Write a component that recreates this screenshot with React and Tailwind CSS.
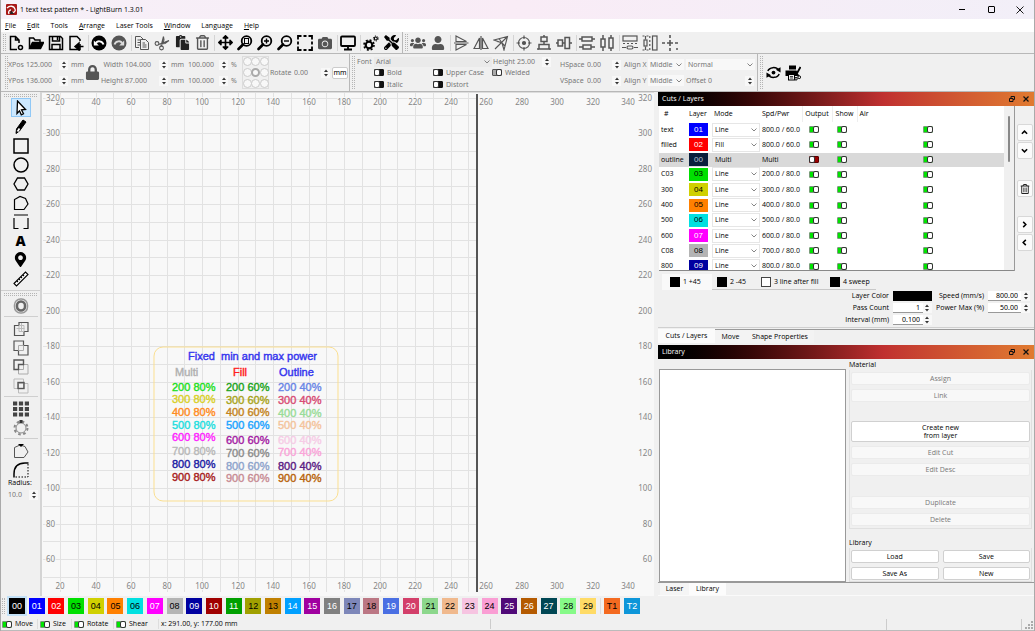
/**
 * App.jsx — Laser cutting editor window
 * Menu bar, tool bars, workspace with rulers, cut layers and material library.
 */
import {
  FaArrowsAlt, FaCamera, FaCut, FaLock, FaMapMarkerAlt,
  FaPaste, FaPrint, FaRegTrashAlt, FaTools, FaUser, FaUsers,
} from 'react-icons/fa'

const MENUS = ['File', 'Edit', 'Tools', 'Arrange', 'Laser Tools', 'Window', 'Language', 'Help']
const MENU_PLAIN = ['Tools', 'Laser Tools', 'Language']

const LAYERS = [
  { name: 'text',    no: '01', cls: 'bg-[#0000ff] text-white',     mode: 'Line', spd: '800.0 / 60.0' },
  { name: 'filled',  no: '02', cls: 'bg-[#ff0000] text-white',     mode: 'Fill', spd: '800.0 / 60.0' },
  { name: 'outline', no: '00', cls: 'bg-[#0a1f3c] text-[#b8c4d4]', mode: 'Multi', spd: 'Multi', selected: true },
  { name: 'C03',     no: '03', cls: 'bg-[#00e000] text-black',     mode: 'Line', spd: '200.0 / 80.0' },
  { name: '300',     no: '04', cls: 'bg-[#d0d000] text-black',     mode: 'Line', spd: '300.0 / 80.0' },
  { name: '400',     no: '05', cls: 'bg-[#ff8000] text-black',     mode: 'Line', spd: '400.0 / 80.0' },
  { name: '500',     no: '06', cls: 'bg-[#00e0e0] text-black',     mode: 'Line', spd: '500.0 / 80.0' },
  { name: '600',     no: '07', cls: 'bg-[#ff00ff] text-white',     mode: 'Line', spd: '600.0 / 80.0' },
  { name: 'C08',     no: '08', cls: 'bg-[#b4b4b4] text-black',     mode: 'Line', spd: '700.0 / 80.0' },
  { name: '800',     no: '09', cls: 'bg-[#0000a0] text-white',     mode: 'Line', spd: '800.0 / 80.0' },
]

const PALETTE = [
  ['00', 'bg-black text-white'], ['01', 'bg-[#0000ff] text-white'], ['02', 'bg-[#ff0000] text-white'],
  ['03', 'bg-[#00e000] text-black'], ['04', 'bg-[#d0d000] text-black'], ['05', 'bg-[#ff8000] text-black'],
  ['06', 'bg-[#00e0e0] text-black'], ['07', 'bg-[#ff00ff] text-white'], ['08', 'bg-[#b4b4b4] text-black'],
  ['09', 'bg-[#0000a0] text-white'], ['10', 'bg-[#a00000] text-white'], ['11', 'bg-[#00a000] text-white'],
  ['12', 'bg-[#a0a000] text-black'], ['13', 'bg-[#c08000] text-black'], ['14', 'bg-[#00a0ff] text-white'],
  ['15', 'bg-[#a000a0] text-white'], ['16', 'bg-[#808080] text-white'], ['17', 'bg-[#7d87b9] text-black'],
  ['18', 'bg-[#bb7784] text-black'], ['19', 'bg-[#4a6fe3] text-white'], ['20', 'bg-[#d33f6a] text-white'],
  ['21', 'bg-[#8cd78c] text-black'], ['22', 'bg-[#f0b98d] text-black'], ['23', 'bg-[#f6c4e1] text-black'],
  ['24', 'bg-[#fa9ed4] text-black'], ['25', 'bg-[#500a78] text-white'], ['26', 'bg-[#b45a00] text-white'],
  ['27', 'bg-[#004754] text-white'], ['28', 'bg-[#86fa88] text-black'], ['29', 'bg-[#ffdb66] text-black'],
]

// Test pattern on the canvas: baseline and colour of every line
const PATTERN = [
  { x: 130, rows: [[298, '200 80%', '#1fe01f'], [310, '300 80%', '#d8d028'], [323, '400 80%', '#ff8c1f'], [336, '500 80%', '#1fdede'], [348, '600 80%', '#ff1fff'], [362, '700 80%', '#b8b8b8'], [375, '800 80%', '#1c1ca4'], [388, '900 80%', '#a81c1c']] },
  { x: 184, rows: [[298, '200 60%', '#1ca41c'], [311, '300 60%', '#a8a420'], [323, '400 60%', '#c48420'], [336, '500 60%', '#20a4ff'], [351, '600 60%', '#a41ca4'], [364, '700 60%', '#8c8c8c'], [377, '800 60%', '#8ea4cc'], [389, '900 60%', '#c88c94']] },
  { x: 236, rows: [[298, '200 40%', '#6a86e6'], [311, '300 40%', '#d84c74'], [324, '400 40%', '#98dc98'], [336, '500 40%', '#f4c49c'], [351, '600 40%', '#f6cce6'], [363, '700 40%', '#faa4d8'], [377, '800 40%', '#5c1c84'], [389, '900 40%', '#b8640c']] },
]

/* ---------- small controls ---------- */

const TOGGLES = {
  on:    'bg-[#00e400] border-[#7a9a7a] after:right-[-1px]',
  off:   'bg-[#9a0000] border-[#5a0000] after:left-[-1px]',
  dark:  'bg-[#111] border-[#111] after:left-[-1px]',
  faded: 'bg-[#aaa] border-[#555] after:right-[-1px]',
}

function Toggle({ kind = 'on', id, label }) {
  return (
    <input
      type="checkbox"
      id={id}
      aria-label={label}
      defaultChecked={kind === 'on'}
      className={`relative block h-[7px] w-[10px] shrink-0 appearance-none rounded-[1px] border after:absolute after:top-[-1px] after:h-[7px] after:w-[6px] after:rounded-[2px] after:border after:border-[#333] after:bg-white ${TOGGLES[kind]}`}
    />
  )
}

function LabelledToggle({ id, kind, text }) {
  return (
    <div className="flex items-center gap-[3px]">
      <Toggle id={id} kind={kind} />
      <label htmlFor={id}>{text}</label>
    </div>
  )
}

function Spin() {
  return (
    <div className="flex h-[10px] w-[9px] shrink-0 flex-col bg-[#f8f8f8] text-[#333]">
      <button aria-label="Increase" className="flex flex-1 items-center justify-center">
        <svg width="4" height="3" viewBox="0 0 4 3"><path d="M0 3L2 .5l2 2.500z" fill="currentColor" /></svg>
      </button>
      <button aria-label="Decrease" className="flex flex-1 items-center justify-center">
        <svg width="4" height="3" viewBox="0 0 4 3"><path d="M0 0l2 2.500L4 0z" fill="currentColor" /></svg>
      </button>
    </div>
  )
}

function NumField({ id, label, value, labelCls = '', inputCls = '', unit }) {
  return (
    <div className="flex h-4 items-center">
      {label && <label htmlFor={id} className={`shrink-0 whitespace-nowrap ${labelCls}`}>{label}</label>}
      <input id={id} aria-label={label ? undefined : id} defaultValue={value} className={`min-w-0 shrink-0 bg-transparent ${inputCls}`} />
      <Spin />
      {unit && <span className="shrink-0 pl-[3px]">{unit}</span>}
    </div>
  )
}

function Combo({ id, value, cls = '', bg = 'bg-[#f8f8f8]' }) {
  return (
    <div className={`relative shrink-0 ${bg} ${cls}`}>
      <select id={id} aria-label={id} defaultValue={value} className="block h-full w-full appearance-none pl-[2px]">
        <option>{value}</option>
      </select>
      <svg width="6" height="4" viewBox="0 0 6 4" className="pointer-events-none absolute top-1/2 right-[2px] -translate-y-1/2">
        <path d="M.5.5L3 3 5.500.5" fill="none" stroke="#666" strokeWidth=".8" />
      </svg>
    </div>
  )
}

function Grip({ horizontal }) {
  return horizontal
    ? <div className="mx-[3px] h-[3px] border-y border-dotted border-[#b4b4b4]" />
    : <div className="my-[2px] w-[3px] shrink-0 self-stretch border-x border-dotted border-[#b4b4b4]" />
}

/* ---------- icons ---------- */

function Ico({ children, size = 16, color = '#000', sw = 1.5 }) {
  return (
    <svg width={size} height={size} viewBox="0 0 16 16" fill="none" stroke={color} strokeWidth={sw}>
      {children}
    </svg>
  )
}

const GREY = '#555'

const Lens = ({ children }) => (
  <Ico sw={1.8}>
    <circle cx="9.500" cy="6" r="4.800" />
    <path d="M6 9.500L1.500 14" strokeWidth="2.600" strokeLinecap="round" />
    {children}
  </Ico>
)

const MAIN_TOOLS = [
  ['New', <Ico><path d="M9 14.500H2.500v-13h5L11 5v3M7.500 1.500V5H11" /><circle cx="12.500" cy="12.500" r="2" /></Ico>],
  ['Open', <Ico><path d="M1.500 13V3h4l1.500 2h5v2.500" /><path d="M1.500 13.500L4.500 7.500h11L12.500 13.500z" fill="#000" /></Ico>],
  ['Save', <Ico><path d="M1.500 1.500h11l2 2v11h-13z" /><path d="M4.500 1.500V6h7V1.500M4 14.500V9.500h8v5" /><path d="M9.500 2v3" /></Ico>],
  ['Import', <Ico><path d="M12 9V14.500H2v-13h7L12 4.500V6" /><path d="M15.500 11.500H9M11 8l-4 3.500L11 15z" fill="#000" /></Ico>],
  null,
  ['Undo', <Ico><circle cx="8" cy="8" r="7.500" fill="#000" stroke="none" /><path d="M5 8.500C6 5.500 11 5.500 12.500 9.500" stroke="#fff" strokeWidth="2" /><path d="M2.800 5.500v5h5z" fill="#fff" stroke="none" /></Ico>],
  ['Redo', <Ico><circle cx="8" cy="8" r="7.500" fill={GREY} stroke="none" /><path d="M11 8.500C10 5.500 5 5.500 3.500 9.500" stroke="#ddd" strokeWidth="2" /><path d="M13.200 5.500v5h-5z" fill="#ddd" stroke="none" /></Ico>],
  null,
  ['Copy', <Ico color={GREY} sw={1}><path d="M5 12.500H1.500v-11h5L9 4M3.500 5H6M3.500 7.500H6M3.500 10H6" /><path d="M6.500 4.500h5L14.500 7.500v7h-8zM8.500 8H11M8.500 10h4M8.500 12h4" /></Ico>],
  ['Cut', <Ico color={GREY} sw={1.1}><circle cx="3" cy="8.500" r="1.900" /><circle cx="7.500" cy="13" r="1.900" /><path d="M4.500 9.500L15 5.500M7 11L9.500 1.500M9.500 1.500L10 5 7.500 11M15 5.500L11 8.500 4.800 9.200" /></Ico>],
  ['Paste', <FaPaste size={15} color="#222" />],
  ['Delete', <FaRegTrashAlt size={15} color={GREY} />],
  null,
  ['Pan', <FaArrowsAlt size={15} />],
  ['Zoom to page', <Lens><rect x="7.500" y="3.500" width="4" height="5" strokeWidth="1" /></Lens>],
  ['Zoom in', <Lens><path d="M9.500 3.500v5M7 6h5" strokeWidth="1.400" /></Lens>],
  ['Zoom out', <Lens><path d="M7 6h5" strokeWidth="1.400" /></Lens>],
  ['Frame selection', <Ico sw={1.8}><path d="M1 4.500V1h3.500M6.500 1h3M11.500 1H15v3.500M15 6.500v3M15 11.500V15h-3.500M9.500 15h-3M4.500 15H1v-3.500M1 9.500v-3" /></Ico>],
  ['Capture', <FaCamera size={14} color="#555" />],
  null,
  ['Preview', <Ico sw={1.8}><rect x="1" y="1.500" width="14" height="9.500" rx="1" /><path d="M8 11v3M4 14.500h8" /></Ico>],
  null,
  ['Settings', <Ico><circle cx="6" cy="10" r="3.300" strokeWidth="2.200" /><circle cx="6" cy="10" r="5" strokeWidth="1.600" strokeDasharray="2 1.930" /><circle cx="12.800" cy="3.500" r="1.500" strokeWidth="1.200" /><circle cx="12.800" cy="3.500" r="2.500" strokeWidth="1" strokeDasharray="1.200 1.420" /></Ico>],
  ['Device settings', <FaTools size={15} />],
]

const ARRANGE_TOOLS = [
  ['Group', <FaUsers size={16} color={GREY} />],
  ['Ungroup', <FaUser size={14} color={GREY} />],
  null,
  ['Flip vertical', <Ico color={GREY} sw={1.1}><path d="M3 1L13.500 6.500H3zM3 15L13.500 9.500H3zM1 8h14.500" /></Ico>],
  ['Flip horizontal', <Ico color={GREY} sw={1.2}><path d="M1 13.500L6.500 3v10.500zM15 13.500L9.500 3v10.500zM8 1v14" /></Ico>],
  ['Mirror', <Ico color={GREY} sw={1.1}><path d="M1 5L14.500 1.500 11 15 9 8zM14.500 1.500L2 14M4 6.500L9 7.500M6 3.500L9 8M9 8l3 3" /></Ico>],
  null,
  ['Align centers', <Ico color={GREY} sw={1.2}><circle cx="8" cy="8" r="5.500" /><circle cx="8" cy="8" r="1.500" fill={GREY} /><path d="M8 .5V4M8 12v3.500M.5 8H4M12 8h3.500" /></Ico>],
  ['Align vertical', <Ico color={GREY}><rect x="5" y="2" width="6" height="4.500" /><rect x="3" y="9.500" width="10" height="4.500" /><path d="M8 0v2M8 6.500v3M1 14h2M13 14h2" /></Ico>],
  ['Align horizontal', <Ico color={GREY}><rect x="2" y="5" width="4.500" height="6" /><rect x="9" y="2.500" width="4.500" height="11" /><path d="M0 8h2M6.500 8H9M13.500 8H16" /></Ico>],
  null,
  ['Distribute vertical', <Ico color={GREY}><rect x="3" y="2" width="10" height="4" /><rect x="4" y="10" width="8" height="4" /><path d="M0 4h3M13 4h3M0 12h4M12 12h4" /></Ico>],
  ['Distribute horizontal', <Ico color={GREY}><rect x="2" y="4" width="4" height="8" /><rect x="10" y="3" width="4" height="10" /><path d="M4 0v4M4 12v4M12 0v3M12 13v3" /></Ico>],
  null,
  ['Match width', <Ico color={GREY} sw={1.2}><rect x="1" y="1" width="14" height="5" /><path d="M1 8.500h2M5 8.500h2M9 8.500h2M13 8.500h2M0 12.500h4M12 12.500h4" /><rect x="5" y="11" width="6" height="3" rx="1.500" /></Ico>],
  ['Match height', <Ico color={GREY} sw={1.2}><rect x="10.500" y="1" width="4.500" height="14" /><path d="M.5 1h2M4.500 1h2M.5 15h2M4.500 15h2M3.500 1v3.500M3.500 11.500V15M7.800 1v2M7.800 5v2M7.800 9v2M7.800 13v2" /><rect x="2" y="5" width="3" height="6" /></Ico>],
  ['Move to center', <Ico color={GREY} sw={1.6}><path d="M8 0v3M8 5v6M8 13v3M0 8h3M5 8h6M13 8h3" /><path d="M14 14h2" /></Ico>],
]

const DRAW_TOOLS = [
  ['Select', <Ico sw={1.3}><path d="M4.500 1l8 8.500-4 .3 2 4-2.200 1-1.800-4L4 13.500z" fill="#fff" /></Ico>],
  ['Draw lines', <Ico><path d="M3 14.500l.5-4.500L10 1l3 2-6.500 9z" fill="#000" strokeWidth="1" /><path d="M4.500 12.500l2-3" stroke="#fff" strokeWidth="1.800" /></Ico>],
  ['Rectangle', <Ico><rect x="1" y="1" width="14" height="14" /></Ico>],
  ['Ellipse', <Ico><circle cx="8" cy="8" r="7" /></Ico>],
  ['Polygon', <Ico sw={1.3}><path d="M4.500 2h7L15 8l-3.500 6h-7L1 8z" /></Ico>],
  ['Edit nodes', <Ico sw={1.2}><path d="M1.500 14.500V4.500L7 1.500l5.500 2L15 9l-4 5.500z" /></Ico>],
  ['Edit tabs', <Ico sw={1.2}><path d="M1 1h14M1 4v10.500h4.500M10.500 14.500H15V4" /></Ico>],
  ['Text', <span className="font-['Noto_Sans',sans-serif] text-[14px] leading-none font-black">A</span>],
  ['Position laser', <FaMapMarkerAlt size={15} />],
  ['Measure', <Ico sw={1.1}><path d="M1 12.500L12.500 1l2.500 2.500L3.500 15z" fill="#fff" /><path d="M4 10l1 1M6 8l1 1M8 6l1 1M10 4l1 1" /></Ico>],
]

const EDIT_TOOLS = [
  ['Offset', <Ico><rect x="1.500" y="1" width="13" height="14" rx="6" stroke="#999" /><rect x="4" y="3.500" width="8" height="9" rx="4" stroke="#666" strokeWidth="2.500" /></Ico>],
  null,
  ['Weld', <Ico color={GREY} sw={1.2}><path d="M6 1.500h9v9h-4v4H1.500v-10H6z" /><path d="M6 4.500v6h5v-6zM3.500 7.500h8M8.500 2v9" stroke="#bbb" strokeWidth="1" /></Ico>],
  ['Boolean union', <Ico color={GREY} sw={1.2}><path d="M1 1h9.500v4.500H15V15H5.500v-4.500H1z" /><path d="M5.500 10.500v-5h5v5z" stroke="#aaa" strokeWidth="1" /></Ico>],
  ['Boolean subtract', <Ico color="#aaa" sw={1}><path d="M10.500 5.500H15V15H5.500v-4.500h5z" /><path d="M1 1h9.500v4.500h-5v5H1z" stroke={GREY} strokeWidth="1.400" /></Ico>],
  ['Boolean intersect', <Ico color="#bbb" sw={1}><path d="M1 1h9.500v9.500H1zM5.500 5.500H15V15H5.500z" /><rect x="5" y="4.500" width="6" height="6" stroke={GREY} strokeWidth="1.400" /></Ico>],
  null,
  ['Grid array', <Ico color="#444" sw={4}><path d="M0 2.500h16M0 8h16M0 13.500h16" strokeDasharray="4.200 1.700" /></Ico>],
  ['Circular array', <Ico color="#888" sw={1}><circle cx="8" cy="8" r="5" /><circle cx="8" cy="8" r="6.500" strokeWidth="2" strokeDasharray="2.600 2.500" /><path d="M6.500 1.500h3" stroke="#333" strokeWidth="3" /></Ico>],
  null,
  ['Start point', <Ico color={GREY} sw={1}><path d="M1.500 14.500V4.500L7 2l5 1.500L15 9l-4 5.500z" /><path d="M5 1h6L8 4z" fill="#000" stroke="none" /></Ico>],
  ['Fillet', <Ico><path d="M1 15.500V12C1 5 5 1 12 1h3.500" /><path d="M15 2v13H2" strokeWidth="1" strokeDasharray="1.500 1.500" /></Ico>],
]

function ToolRow({ tools }) {
  return tools.map((t, i) => t
    ? <button key={i} aria-label={t[0]} className="flex h-5 w-5 shrink-0 items-center justify-center">{t[1]}</button>
    : <div key={i} className="h-4 w-[3px] shrink-0 border-r border-[#d4d4d4]" />)
}

function ToolColumn({ tools, active }) {
  return tools.map((t, i) => t
    ? (
      <button
        key={i}
        aria-label={t[0]}
        className={`flex h-[19px] w-5 items-center justify-center ${t[0] === active ? 'border border-[#90c8f6] bg-[#cce8ff]' : ''}`}
      >
        {t[1]}
      </button>
    )
    : <div key={i} className="mt-px mb-[2px] h-px w-[34px] bg-[#cfcfcf]" />)
}

/* ---------- top area ---------- */

function TitleBar() {
  return (
    <header className="flex h-[19px] items-center bg-linear-to-r from-[#f6f0f8] via-[#f9ecf6] to-[#f2eff8] pl-[5px]">
      <svg width="11" height="11" viewBox="0 0 11 11">
        <rect width="11" height="11" rx="1" fill="#a81818" />
        <path d="M1 4c3-3 7-2 8 1 1 2-1 4-3 3M3 10c-1-2 0-4 2-4" fill="none" stroke="#fff" strokeWidth="1.300" />
        <path d="M5 6l3 4H4z" fill="#222" />
      </svg>
      <h1 className="pl-[3px]">1 text test pattern * - LightBurn 1.3.01</h1>
      <div className="ml-auto flex items-center gap-[7px] pr-[3px]">
        <button aria-label="Minimize" className="flex h-4 w-[22px] items-center justify-center"><span className="h-px w-[6px] bg-black" /></button>
        <button aria-label="Maximize" className="flex h-4 w-[22px] items-center justify-center"><span className="h-[7px] w-[7px] rounded-[1px] border border-black" /></button>
        <button aria-label="Close" className="flex h-4 w-[22px] items-center justify-center">
          <svg width="8" height="8" viewBox="0 0 8 8"><path d="M.5.5l7 7M7.500.5l-7 7" stroke="#000" strokeWidth=".9" /></svg>
        </button>
      </div>
    </header>
  )
}

function MenuBar() {
  return (
    <nav className="flex h-[13px] items-center gap-[11px] bg-white pl-1">
      {MENUS.map(m => (
        <button key={m} className="whitespace-nowrap">
          {MENU_PLAIN.includes(m) ? m : <><u>{m[0]}</u>{m.slice(1)}</>}
        </button>
      ))}
    </nav>
  )
}

function PropertyBar() {
  return (
    <div className="flex h-[38px] items-center border-b border-[#b8b8b8] pl-1 font-['Noto_Sans',sans-serif] text-[#777]">
      <Grip />
      <div className="w-[76px] shrink-0">
        <NumField id="xpos" label="XPos" value="125.000" labelCls="w-[18px]" inputCls="w-[33px]" unit="mm" />
        <NumField id="ypos" label="YPos" value="136.000" labelCls="w-[18px]" inputCls="w-[33px]" unit="mm" />
      </div>
      <button aria-label="Lock aspect ratio" className="flex w-4 shrink-0 justify-center text-[#555]"><FaLock size={15} /></button>
      <div className="w-[88px] shrink-0">
        <NumField id="width" label="Width" value="104.000" labelCls="w-[25px] pr-[2px] text-right" inputCls="w-[34px]" unit="mm" />
        <NumField id="height" label="Height" value="87.000" labelCls="w-[25px] pr-[2px] text-right" inputCls="w-[34px]" unit="mm" />
      </div>
      <div className="w-[54px] shrink-0">
        <NumField id="Width percent" value="100.000" inputCls="w-[31px]" unit="%" />
        <NumField id="Height percent" value="100.000" inputCls="w-[31px]" unit="%" />
      </div>
      <div className="grid w-[27px] shrink-0 grid-cols-3 gap-y-[2px] border border-[#ddd]">
        {Array.from({ length: 9 }, (_, i) => (
          <input
            key={i}
            type="radio"
            name="anchor"
            aria-label={`Anchor ${i + 1}`}
            defaultChecked={i === 4}
            className={`h-[9px] w-[9px] appearance-none rounded-full ${i === 4 ? 'border-2 border-[#aaa]' : 'border border-[#ccc]'} bg-[#f8f8f8]`}
          />
        ))}
      </div>
      <div className="w-[63px] shrink-0 pl-px">
        <NumField id="rotate" label="Rotate" value="0.00" labelCls="w-[24px]" inputCls="w-[27px]" />
      </div>
      <button className="h-3 w-4 shrink-0 rounded-[2px] border border-[#ccc] bg-white leading-none text-black">mm</button>
      <div className="mr-[2px] ml-[1px] w-px shrink-0 self-stretch bg-[#b8b8b8]" />
      <Grip />

      <div className="ml-[2px] flex w-[196px] shrink-0 flex-col">
        <div className="flex h-[12px] items-center">
          <label htmlFor="Font" className="w-[17px]">Font</label>
          <Combo id="Font" value="Arial" cls="h-[10px] w-[118px]" bg="bg-[#eaeaea]" />
          <NumField id="textheight" label="Height" value="25.00" labelCls="w-[24px] pl-[1px]" inputCls="w-[26px] pl-px" />
        </div>
        <div className="grid grid-cols-[59px_59px_auto] items-center gap-y-[2px] pl-[17px]">
          <LabelledToggle id="bold" kind="dark" text="Bold" />
          <LabelledToggle id="upper" kind="dark" text="Upper Case" />
          <LabelledToggle id="welded" kind="faded" text="Welded" />
          <LabelledToggle id="italic" kind="dark" text="Italic" />
          <LabelledToggle id="distort" kind="dark" text="Distort" />
        </div>
      </div>

      <div className="ml-[7px] w-[64px] shrink-0">
        <NumField id="hspace" label="HSpace" value="0.00" labelCls="w-[27px]" inputCls="w-[25px]" />
        <NumField id="vspace" label="VSpace" value="0.00" labelCls="w-[27px]" inputCls="w-[25px]" />
      </div>
      <div className="w-[62px] shrink-0">
        {['X', 'Y'].map(a => (
          <div key={a} className="flex h-4 items-center">
            <label htmlFor={`Align ${a}`} className="w-[24px] whitespace-nowrap">Align {a}</label>
            <Combo id={`Align ${a}`} value="Middle" cls="h-[11px] w-[36px]" />
          </div>
        ))}
      </div>
      <div className="w-[71px] shrink-0">
        <div className="flex h-4 items-center"><Combo id="Text mode" value="Normal" cls="h-[11px] w-[69px]" /></div>
        <NumField id="offset" label="Offset" value="0" labelCls="w-[22px]" inputCls="w-[37px]" />
      </div>
      <div className="mr-[2px] w-px shrink-0 self-stretch bg-[#b8b8b8]" />
      <Grip />
      <div className="flex text-black">
        <button aria-label="Rotary" className="flex h-5 w-5 items-center justify-center">
          <Ico size={15}><path d="M2 6.500C3.500 2 11 1.500 13.500 5.500M14 9.500C12.500 14 5 14.500 2.500 10.500" strokeWidth="1.600" /><path d="M.5 8v5.500L5.500 11zM15.500 8V2.500L10.500 5z" fill="#000" stroke="none" /><circle cx="8" cy="8" r="2" fill="#000" stroke="none" /></Ico>
        </button>
        <button aria-label="Print and cut" className="flex h-5 w-5 items-center justify-center">
          <Ico>
            <path d="M4 .5h7v4H4zM.5 5.500h11l1 2v3.500H.5z" fill="#000" stroke="none" />
            <rect x="3.500" y="9.500" width="6" height="5.500" fill="#eee" strokeWidth="1" />
            <path d="M5 11.500h3M5 13h3" strokeWidth=".7" />
            <path d="M15.500 2L11 10M10 8l4 3" strokeWidth="1.800" />
            <circle cx="14.200" cy="12.200" r="1.400" strokeWidth="1" fill="#eee" />
            <circle cx="11" cy="13.800" r="1.300" strokeWidth="1" fill="#eee" />
          </Ico>
        </button>
      </div>
    </div>
  )
}

/* ---------- workspace ---------- */

const toX = mm => Math.round(18 + (mm - 20) * 1.775)
const toY = mm => Math.round(40 + (300 - mm) * 1.775)
const steps = (from, to, by) => Array.from({ length: (to - from) / by + 1 }, (_, i) => from + i * by)

function Workspace() {
  return (
    <svg className="block h-full w-full bg-[#f8f8f8]" role="img" aria-label="Workspace">
      <g stroke="#e2e2e2" strokeWidth="1" shapeRendering="crispEdges">
        {steps(20, 250, 10).map(v => <line key={v} x1={toX(v)} x2={toX(v)} y1="0" y2="499" />)}
        {steps(50, 320, 10).map(v => <line key={v} x1="1" x2={toX(255)} y1={toY(v)} y2={toY(v)} />)}
      </g>
      <line x1={toX(255)} x2={toX(255)} y1="1" y2="499" stroke="#555" strokeWidth="2" />

      {/* Rulers */}
      <g className="font-['Noto_Sans',sans-serif] text-[8px]" fill="#868686" stroke="#f8f8f8" strokeWidth="2" paintOrder="stroke">
        {steps(20, 340, 20).map(v => (
          <g key={v} textAnchor="middle">
            <text x={toX(v)} y="12">{v}</text>
            <text x={toX(v)} y="496">{v}</text>
          </g>
        ))}
        {steps(60, 320, 20).map(v => (
          <g key={v}>
            <text x="4" y={toY(v) + 3}>{v}</text>
            <text x="610" y={toY(v) + 3} textAnchor="end">{v}</text>
          </g>
        ))}
      </g>

      {/* Test pattern */}
      <rect x="112" y="254" width="184" height="154" rx="9" fill="none" stroke="#fbdf90" />
      <g className="font-['Liberation_Sans',Arial,sans-serif] text-[11px]" strokeWidth=".4">
        <text x="146" y="267" fill="#3434ee" stroke="#3434ee" xmlSpace="preserve">Fixed  min and max power</text>
        <text x="133" y="283" fill="#b0b0b0" stroke="#b0b0b0">Multi</text>
        <text x="191" y="283" fill="#ff2020" stroke="#ff2020">Fill</text>
        <text x="237" y="283" fill="#3434ee" stroke="#3434ee">Outline</text>
        {PATTERN.map(col => col.rows.map(([y, text, color]) => (
          <text key={text} x={col.x} y={y} fill={color} stroke={color}>{text}</text>
        )))}
      </g>
    </svg>
  )
}

/* ---------- docked panels ---------- */

function DockHeader({ title }) {
  return (
    <div className="flex h-[14px] shrink-0 items-center bg-linear-to-r from-black via-[#c03030] via-60% to-[#e07a30] pr-[5px] pl-1 text-white">
      <h2>{title}</h2>
      <div className="ml-auto flex gap-2">
        <button aria-label={`Float ${title}`}>
          <svg width="6" height="6" viewBox="0 0 6 6" fill="none" stroke="#111"><path d="M2 2V.5h3.500V3.500H4M.5 2.500H4v3H.5z" /></svg>
        </button>
        <button aria-label={`Close ${title}`}>
          <svg width="6" height="6" viewBox="0 0 6 6" stroke="#111" strokeWidth="1.200"><path d="M.5.5l5 5M5.500.5l-5 5" /></svg>
        </button>
      </div>
    </div>
  )
}

function SideButton({ label, children, cls = '' }) {
  return (
    <button aria-label={label} className={`flex h-[17px] w-4 items-center justify-center rounded-[2px] border border-[#d8d8d8] bg-[#fbfbfb] ${cls}`}>
      {children}
    </button>
  )
}

const Arrow = ({ d }) => <Ico size={7} sw={3.5}><path d={d} /></Ico>

function LayerTable() {
  return (
    <div className="flex">
      <div className="ml-px flex h-[165px] flex-1 overflow-hidden border-b border-[#888] bg-white">
        <table className="h-[168px] flex-1 table-fixed border-collapse">
          <colgroup>
            <col className="w-[28px]" /><col className="w-[25px]" /><col className="w-[48px]" /><col className="w-[42px]" />
            <col className="w-[30px]" /><col className="w-[25px]" /><col />
          </colgroup>
          <thead>
            <tr className="h-4 text-left">
              <th className="p-0 pl-[5px] font-normal">#</th>
              <th className="p-0 pl-[2px] font-normal">Layer</th>
              <th className="p-0 pl-[2px] font-normal">Mode</th>
              <th className="p-0 pl-[2px] font-normal">Spd/Pwr</th>
              <th className="border-l border-[#eee] p-0 text-center font-normal">Output</th>
              <th className="border-l border-[#eee] p-0 text-center font-normal">Show</th>
              <th className="border-l border-[#eee] p-0 pl-[2px] font-normal">Air</th>
            </tr>
          </thead>
          <tbody>
            {LAYERS.map(l => (
              <tr key={l.name} className={l.selected ? 'bg-[#d9d9d9]' : ''}>
                <td className="p-0 pl-[2px] whitespace-nowrap">{l.name}</td>
                <td className="p-0 px-[2px]"><span className={`flex h-[13px] w-[19px] items-center justify-center font-['Liberation_Sans',Arial,sans-serif] text-[8px] ${l.cls}`}>{l.no}</span></td>
                <td className="p-0">
                  {l.selected
                    ? <span className="pl-[3px]">{l.mode}</span>
                    : <Combo id={`Mode ${l.no}`} value={l.mode} cls="h-[14px] border border-[#e6e6e6]" bg="bg-white" />}
                </td>
                <td className="p-0 pl-[2px] whitespace-nowrap">{l.spd}</td>
                <td className="p-0"><div className="flex justify-center pr-[7px]"><Toggle kind={l.selected ? 'off' : 'on'} label={`Output ${l.no}`} /></div></td>
                <td className="p-0"><div className="flex justify-center pr-[5px]"><Toggle label={`Show ${l.no}`} /></div></td>
                <td className="p-0"><div className="flex justify-center pr-[5px]"><Toggle label={`Air ${l.no}`} /></div></td>
              </tr>
            ))}
          </tbody>
        </table>
        <div className="w-[10px] shrink-0 bg-[#f0f0f0] pt-[10px]">
          <div className="mx-auto h-[46px] w-[2px] rounded-full bg-[#888]" />
        </div>
      </div>
      <div className="flex w-5 shrink-0 flex-col items-center gap-[1px] border-l border-[#999] pt-[18px]">
        <SideButton label="Move up"><Arrow d="M2 11l6-6 6 6" /></SideButton>
        <SideButton label="Move down"><Arrow d="M2 5l6 6 6-6" /></SideButton>
        <SideButton label="Delete layer" cls="mt-[20px]"><FaRegTrashAlt size={10} color="#222" /></SideButton>
        <SideButton label="Next" cls="mt-[18px]"><Arrow d="M5 2l6 6-6 6" /></SideButton>
        <SideButton label="Previous"><Arrow d="M11 2L5 8l6 6" /></SideButton>
      </div>
    </div>
  )
}

const SUB_LAYERS = [
  ['1 +45', 'bg-black', 'w-[50px]'], ['2 -45', 'bg-black', 'w-[44px]'],
  ['3 line after fill', 'bg-white border border-[#444]', 'w-[69px]'], ['4 sweep', 'bg-black', 'w-[51px]'],
]

function FormNum({ id, label, value, width }) {
  return (
    <>
      <label htmlFor={id} className="pr-1 pl-1 text-right whitespace-nowrap">{label}</label>
      <div className="flex h-[10px] border-b border-[#999] bg-white">
        <input id={id} defaultValue={value} className={`min-w-0 pr-[3px] text-right font-['Noto_Sans',sans-serif] ${width}`} />
        <Spin />
      </div>
    </>
  )
}

function CutsPanel() {
  return (
    <section className="shrink-0">
      <DockHeader title="Cuts / Layers" />
      <LayerTable />
      <div className="border-b border-[#d0d0d0] pb-[2px]">
        <div className="mt-[3px] flex h-[16px] pl-1">
          {SUB_LAYERS.map(([name, swatch, width], i) => (
            <button
              key={name}
              className={`flex shrink-0 items-center gap-[3px] whitespace-nowrap ${width} ${i === 0 ? 'bg-[#f9f9f9] pl-2' : 'border-b border-[#c8c8c8] pl-[5px]'}`}
            >
              <span className={`h-[10px] w-[10px] ${swatch}`} />{name}
            </button>
          ))}
        </div>
        <div className="ml-auto grid w-fit grid-cols-[auto_39px_auto_42px] items-center gap-y-[2px] pt-[1px] pr-1">
          <span className="pr-1 text-right">Layer Color</span>
          <button aria-label="Layer color" className="h-[10px] bg-black" />
          <FormNum id="speed" label="Speed (mm/s)" value="800.00" width="w-[33px]" />
          <FormNum id="passes" label="Pass Count" value="1" width="w-[30px]" />
          <FormNum id="power" label="Power Max (%)" value="50.00" width="w-[33px]" />
          <FormNum id="interval" label="Interval (mm)" value="0.100" width="w-[30px]" />
        </div>
      </div>
      <div className="mt-px flex h-[14px] border-t border-[#999]">
        <button className="-mt-px w-[57px] bg-[#fbfbfb]">Cuts / Layers</button>
        <button className="w-[31px] bg-[#f3f3f3]">Move</button>
        <button className="w-[68px] bg-[#f3f3f3]">Shape Properties</button>
      </div>
    </section>
  )
}

function LibButton({ children, off, cls = 'h-[13px]' }) {
  return (
    <button
      disabled={off}
      className={`w-full rounded-[2px] border leading-[8px] ${off ? 'border-[#ebebeb] bg-[#f8f8f8] text-[#777]' : 'border-[#d0d0d0] bg-white text-black'} ${cls}`}
    >
      {children}
    </button>
  )
}

function LibraryPanel() {
  return (
    <section className="mt-[2px] flex min-h-0 flex-1 flex-col">
      <DockHeader title="Library" />
      <div className="flex min-h-0 flex-1 border-b border-[#999] pr-[2px] pl-px">
        <div className="mt-[10px] flex-1 border border-[#999] bg-white" />
        <div className="ml-[3px] flex w-[183px] flex-col pt-px">
          <h3 className="leading-[10px]">Material</h3>
          <div className="flex flex-col gap-1 border border-t-0 border-[#e0e0e0] px-px pt-[2px] pb-[2px]">
            <LibButton off>Assign</LibButton>
            <LibButton off>Link</LibButton>
            <LibButton cls="mt-[15px] h-[21px]">Create new<br />from layer</LibButton>
            <LibButton off>Edit Cut</LibButton>
            <LibButton off>Edit Desc</LibButton>
            <LibButton off cls="mt-[16px] h-[13px]">Duplicate</LibButton>
            <LibButton off>Delete</LibButton>
          </div>
          <h3 className="mt-auto leading-[10px]">Library</h3>
          <div className="grid grid-cols-2 gap-x-1 gap-y-1 border border-t-0 border-[#e0e0e0] px-px pt-[2px] pb-px">
            <LibButton>Load</LibButton>
            <LibButton>Save</LibButton>
            <LibButton>Save As</LibButton>
            <LibButton>New</LibButton>
          </div>
        </div>
      </div>
      <div className="flex h-[13px] shrink-0 border-b border-[#fafafa] pl-[2px]">
        <button className="w-[29px] bg-[#f5f5f5]">Laser</button>
        <button className="w-[37px] bg-[#fcfcfc]">Library</button>
      </div>
    </section>
  )
}

/* ---------- bottom ---------- */

function Swatch({ no, cls, active }) {
  return (
    <button className={`h-4 w-4 ${cls} ${active ? 'outline-2 outline-[#c4e2f8]' : ''}`}>{no}</button>
  )
}

function PaletteBar() {
  return (
    <div className="flex h-5 shrink-0 items-center pl-px font-['Liberation_Sans',Arial,sans-serif] text-[9px]">
      <Grip />
      <div className="ml-[4px] flex w-[587px] justify-between">
        {PALETTE.map(([no, cls], i) => <Swatch key={no} no={no} cls={cls} active={i === 0} />)}
      </div>
      <div className="ml-[4px] flex gap-1 border-l border-[#ddd] pl-[3px]">
        <Swatch no="T1" cls="bg-[#f46a20] text-black" />
        <Swatch no="T2" cls="bg-[#0d96d9] text-white" />
      </div>
    </div>
  )
}

function StatusBar() {
  return (
    <footer className="flex h-[15px] shrink-0 items-center border-b border-[#bbb] pt-[2px] pl-px">
      {[['Move', 'w-[36px]'], ['Size', 'w-[32px]'], ['Rotate', 'w-[40px]'], ['Shear', 'w-[43px]']].map(([t, w]) => (
        <div key={t} className={`mr-[2px] border-r border-[#ddd] ${w}`}>
          <LabelledToggle id={`status-${t}`} text={t} />
        </div>
      ))}
      <span className="w-[330px] border-r border-[#ccc] pr-2 whitespace-nowrap">x: 291.00, y: 177.00 mm</span>
      <div className="ml-auto h-[11px] w-[136px] border-x border-[#ccc]" />
      <svg width="12" height="12" viewBox="0 0 12 12" fill="#aaa">
        <path d="M9 3h2v2H9zM9 6h2v2H9zM9 9h2v2H9zM6 6h2v2H6zM6 9h2v2H6zM3 9h2v2H3z" />
      </svg>
    </footer>
  )
}

export default function App() {
  return (
    <div className="flex h-screen flex-col overflow-hidden border-x border-[#aaa] bg-[#f0f0f0] font-['Open_Sans',sans-serif] text-[7px] leading-[10px] text-black">
      <TitleBar />
      <MenuBar />
      <div className="flex h-[22px] shrink-0 items-center border-b border-[#b8b8b8] pl-[2px]">
        <Grip />
        <ToolRow tools={MAIN_TOOLS} />
        <div className="mr-[2px] ml-px w-px self-stretch bg-[#b8b8b8]" />
        <Grip />
        <ToolRow tools={ARRANGE_TOOLS} />
      </div>
      <PropertyBar />

      <main className="flex min-h-0 flex-1">
        <aside className="w-[41px] shrink-0 border-r-2 border-[#d4d4d4] pt-[2px]">
          <Grip horizontal />
          <div className="flex flex-col items-center pt-[1px]"><ToolColumn tools={DRAW_TOOLS} active="Select" /></div>
          <div className="my-[2px] h-px bg-[#cfcfcf]" />
          <Grip horizontal />
          <div className="flex flex-col items-center"><ToolColumn tools={EDIT_TOOLS} /></div>
          <label htmlFor="radius" className="block pl-[7px] leading-[8px]">Radius:</label>
          <div className="pl-[7px] font-['Noto_Sans',sans-serif] text-[#777]">
            <NumField id="radius" value="10.0" inputCls="w-[21px]" />
          </div>
        </aside>
        <div className="min-w-0 flex-1 border-t border-[#ddd]"><Workspace /></div>
        <div className="ml-1 flex w-[376px] shrink-0 flex-col">
          <CutsPanel />
          <LibraryPanel />
        </div>
      </main>

      <PaletteBar />
      <StatusBar />
    </div>
  )
}
